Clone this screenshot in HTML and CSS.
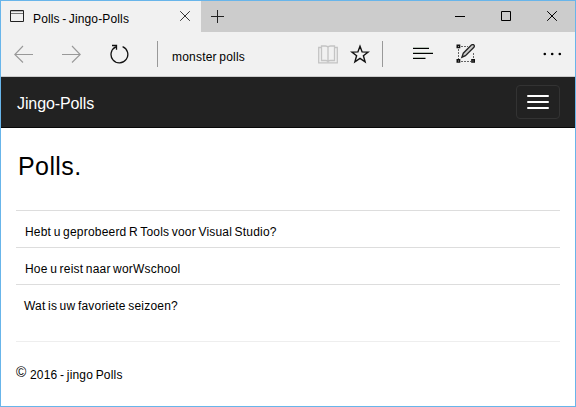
FILE: index.html
```
<!DOCTYPE html>
<html lang="nl">
<head>
<meta charset="utf-8">
<title>Polls - Jingo-Polls</title>
<link rel="stylesheet" href="styles.css">
</head>
<body>
<div class="window">
  <header class="tabbar">
    <div class="tab">
      <svg class="tab-icon" width="14" height="12" viewBox="0 0 14 12"><path d="M.5.5h13v11H.5z" fill="none" stroke="#222"/><path d="M1 3.5h12" stroke="#777"/><path d="M1 1.5h12" stroke="#bbb"/></svg>
      <span class="tab-title">Polls - Jingo-Polls</span>
      <svg class="tab-close" width="10" height="10" viewBox="0 0 10 10"><path d="M.2.2l9.6 9.6M9.8.2L.2 9.8" stroke="#333"/></svg>
    </div>
    <svg class="new-tab" width="13" height="13" viewBox="0 0 13 13"><path d="M0 6.5h13M6.5 0v13" stroke="#222"/></svg>
    <div class="controls">
      <svg width="10" height="10" viewBox="0 0 10 10"><path d="M0 5.5h10" stroke="#000"/></svg>
      <svg width="10" height="10" viewBox="0 0 10 10"><path d="M.5.5h9v9h-9z" fill="none" stroke="#000"/></svg>
      <svg width="10" height="10" viewBox="0 0 10 10"><path d="M.2.2l9.6 9.6M9.8.2L.2 9.8" stroke="#000"/></svg>
    </div>
  </header>
  <div class="toolbar">
    <svg class="back" width="19" height="18" viewBox="0 0 19 18"><path d="M19 9.5H.8M9 1L.8 9.5 9 17.5" fill="none" stroke="#999" stroke-width="1.1"/></svg>
    <svg class="forward" width="19" height="18" viewBox="0 0 19 18"><path d="M0 9.5h18.2M10 1l8.2 8.5-8.2 8" fill="none" stroke="#999" stroke-width="1.1"/></svg>
    <svg class="refresh" width="19" height="20" viewBox="0 0 19 20"><path d="M12.600 2.700A8.400 8.400 0 1 1 5.800 2.900M2 1.500h4.500v4.300" fill="none" stroke="#111" stroke-width="1.300"/></svg>
    <i class="divider first"></i>
    <span class="address">monster polls</span>
    <svg class="book" width="20" height="19" viewBox="0 0 20 19"><path d="M3 2.500H.7v15.300h18.600V2.500H17M3.500 1h4q2 0 2.500 1.300Q10.500 1 12.500 1h4v14.500h-4q-2 0-2.500 1-.5-1-2.500-1h-4zM10 2.500v14.500" fill="none" stroke="#c4c4c4" stroke-width="1.300"/></svg>
    <svg class="star" width="20" height="20" viewBox="0 0 20 20"><path d="M10 2.200l2.100 5.700 6.100.2-4.800 3.700 1.700 6-5.100-3.500-5.100 3.500 1.700-6L1.800 8.100l6.100-.2z" fill="none" stroke="#111" stroke-width="1.400"/></svg>
    <i class="divider second"></i>
    <svg class="hub" width="20" height="12" viewBox="0 0 20 12"><path d="M0 1.500h16M0 6.500h20M0 11.500h12.500" stroke="#000"/><path d="M0 .5h16M0 5.500h20M0 10.500h12.500" stroke="#b5c0b5"/></svg>
    <svg class="note" width="20" height="19" viewBox="0 0 20 19"><path d="M5 2.500h7M2.500 5v10M5 17.500h10M17.500 9v6" fill="none" stroke="#666" stroke-dasharray="2 1"/><path d="M.5.500h3.800v3.800H.5zM.5 15h3.800v3.800H.5zM15.200 15H19v3.800h-3.800z" fill="#111"/><path d="M5.900 13.200l1.400-4L15.600.9q1.500-.8 2.400.2.800 1-.1 2.200L9.400 11.700z" fill="#ccc" stroke="#222" stroke-width="1.300"/><path d="M2 2h1v1H2zM2 16.500h1v1H2zM16.500 16.500h1v1h-1z" fill="#999"/></svg>
    <svg class="more" width="19" height="4" viewBox="0 0 19 4"><circle cx="1.800" cy="2" r="1.300"/><circle cx="9.200" cy="2" r="1.300"/><circle cx="16.800" cy="2" r="1.300"/></svg>
  </div>
  <nav class="navbar">
    <span class="brand">Jingo-Polls</span>
    <div class="toggle"><i></i><i></i><i></i></div>
  </nav>
  <main>
    <h1>Polls.</h1>
    <div class="polls">
      <div class="row"><span>Hebt u geprobeerd R Tools voor Visual Studio?</span></div>
      <div class="row"><span>Hoe u reist naar worWschool</span></div>
      <div class="row last"><span>Wat is uw favoriete seizoen?</span></div>
    </div>
    <footer><span class="copy">©</span><span class="owner">2016 - jingo Polls</span></footer>
  </main>
</div>
</body>
</html>
```
FILE: styles.css
```
* { box-sizing: border-box; }
body { margin: 0; font: 12px/16px "Liberation Sans", Arial, sans-serif; color: #000; letter-spacing: .2px; word-spacing: -1px; overflow: hidden; }
svg, i { display: block; flex: none; }
span { white-space: nowrap; }
.window { width: 576px; height: 407px; border: 1px solid #68b5ea; background: #fff; }
.tabbar { display: flex; height: 31px; background: #ccc; }
.tab { display: flex; width: 200px; background: #f1f1f1; }
.tab-icon { margin: 9px 0 0 9px; }
.tab-title { margin: 10px 0 0 9px; width: 147px; letter-spacing: .14px; }
.tab-close { margin-top: 10px; }
.new-tab { margin: 9px 0 0 10px; }
.controls { display: flex; gap: 36px; margin: 10px 18px 0 auto; }
.toolbar { display: flex; height: 45px; background: #f1f1f1; border-bottom: 1px solid #ccc; }
.back { margin: 13px 0 0 13px; }
.forward { margin: 13px 0 0 29px; }
.refresh { margin: 12px 0 0 29px; }
.divider { width: 1px; height: 26px; margin-top: 9px; background: #999; }
.first { margin-left: 28px; }
.address { width: 146px; margin: 17px 0 0 14px; }
.book { margin-top: 13px; }
.star { margin: 12px 0 0 12px; }
.second { margin-left: 12px; }
.hub { margin: 15px 0 0 30px; }
.note { margin: 12px 0 0 23px; }
.more { margin: 20px 13px 0 auto; }
.navbar { display: flex; justify-content: space-between; height: 51px; padding: 8px 15px 0 16px; background: #222; border-bottom: 1px solid #080808; color: #fff; }
.brand { margin-top: 9px; font-size: 16px; line-height: 20px; letter-spacing: -.1px; }
.toggle { display: flex; flex-direction: column; gap: 4px; width: 44px; height: 34px; padding: 9px 10px; border: 1px solid #333; border-radius: 4px; }
.toggle i { width: 22px; height: 2px; border-radius: 1px; background: #fff; }
main { padding: 23px 15px 0; }
h1 { margin: 0 0 29px 2px; font-size: 25px; line-height: 30px; font-weight: normal; letter-spacing: .4px; }
.row { height: 37px; border-top: 1px solid #ddd; padding: 13px 0 0 9px; }
.row.last { height: 57px; padding-left: 8px; }
footer { display: flex; border-top: 1px solid #eee; padding-top: 22px; }
.copy { width: 14px; font-size: 14px; }
.owner { margin-top: 3px; }
```
